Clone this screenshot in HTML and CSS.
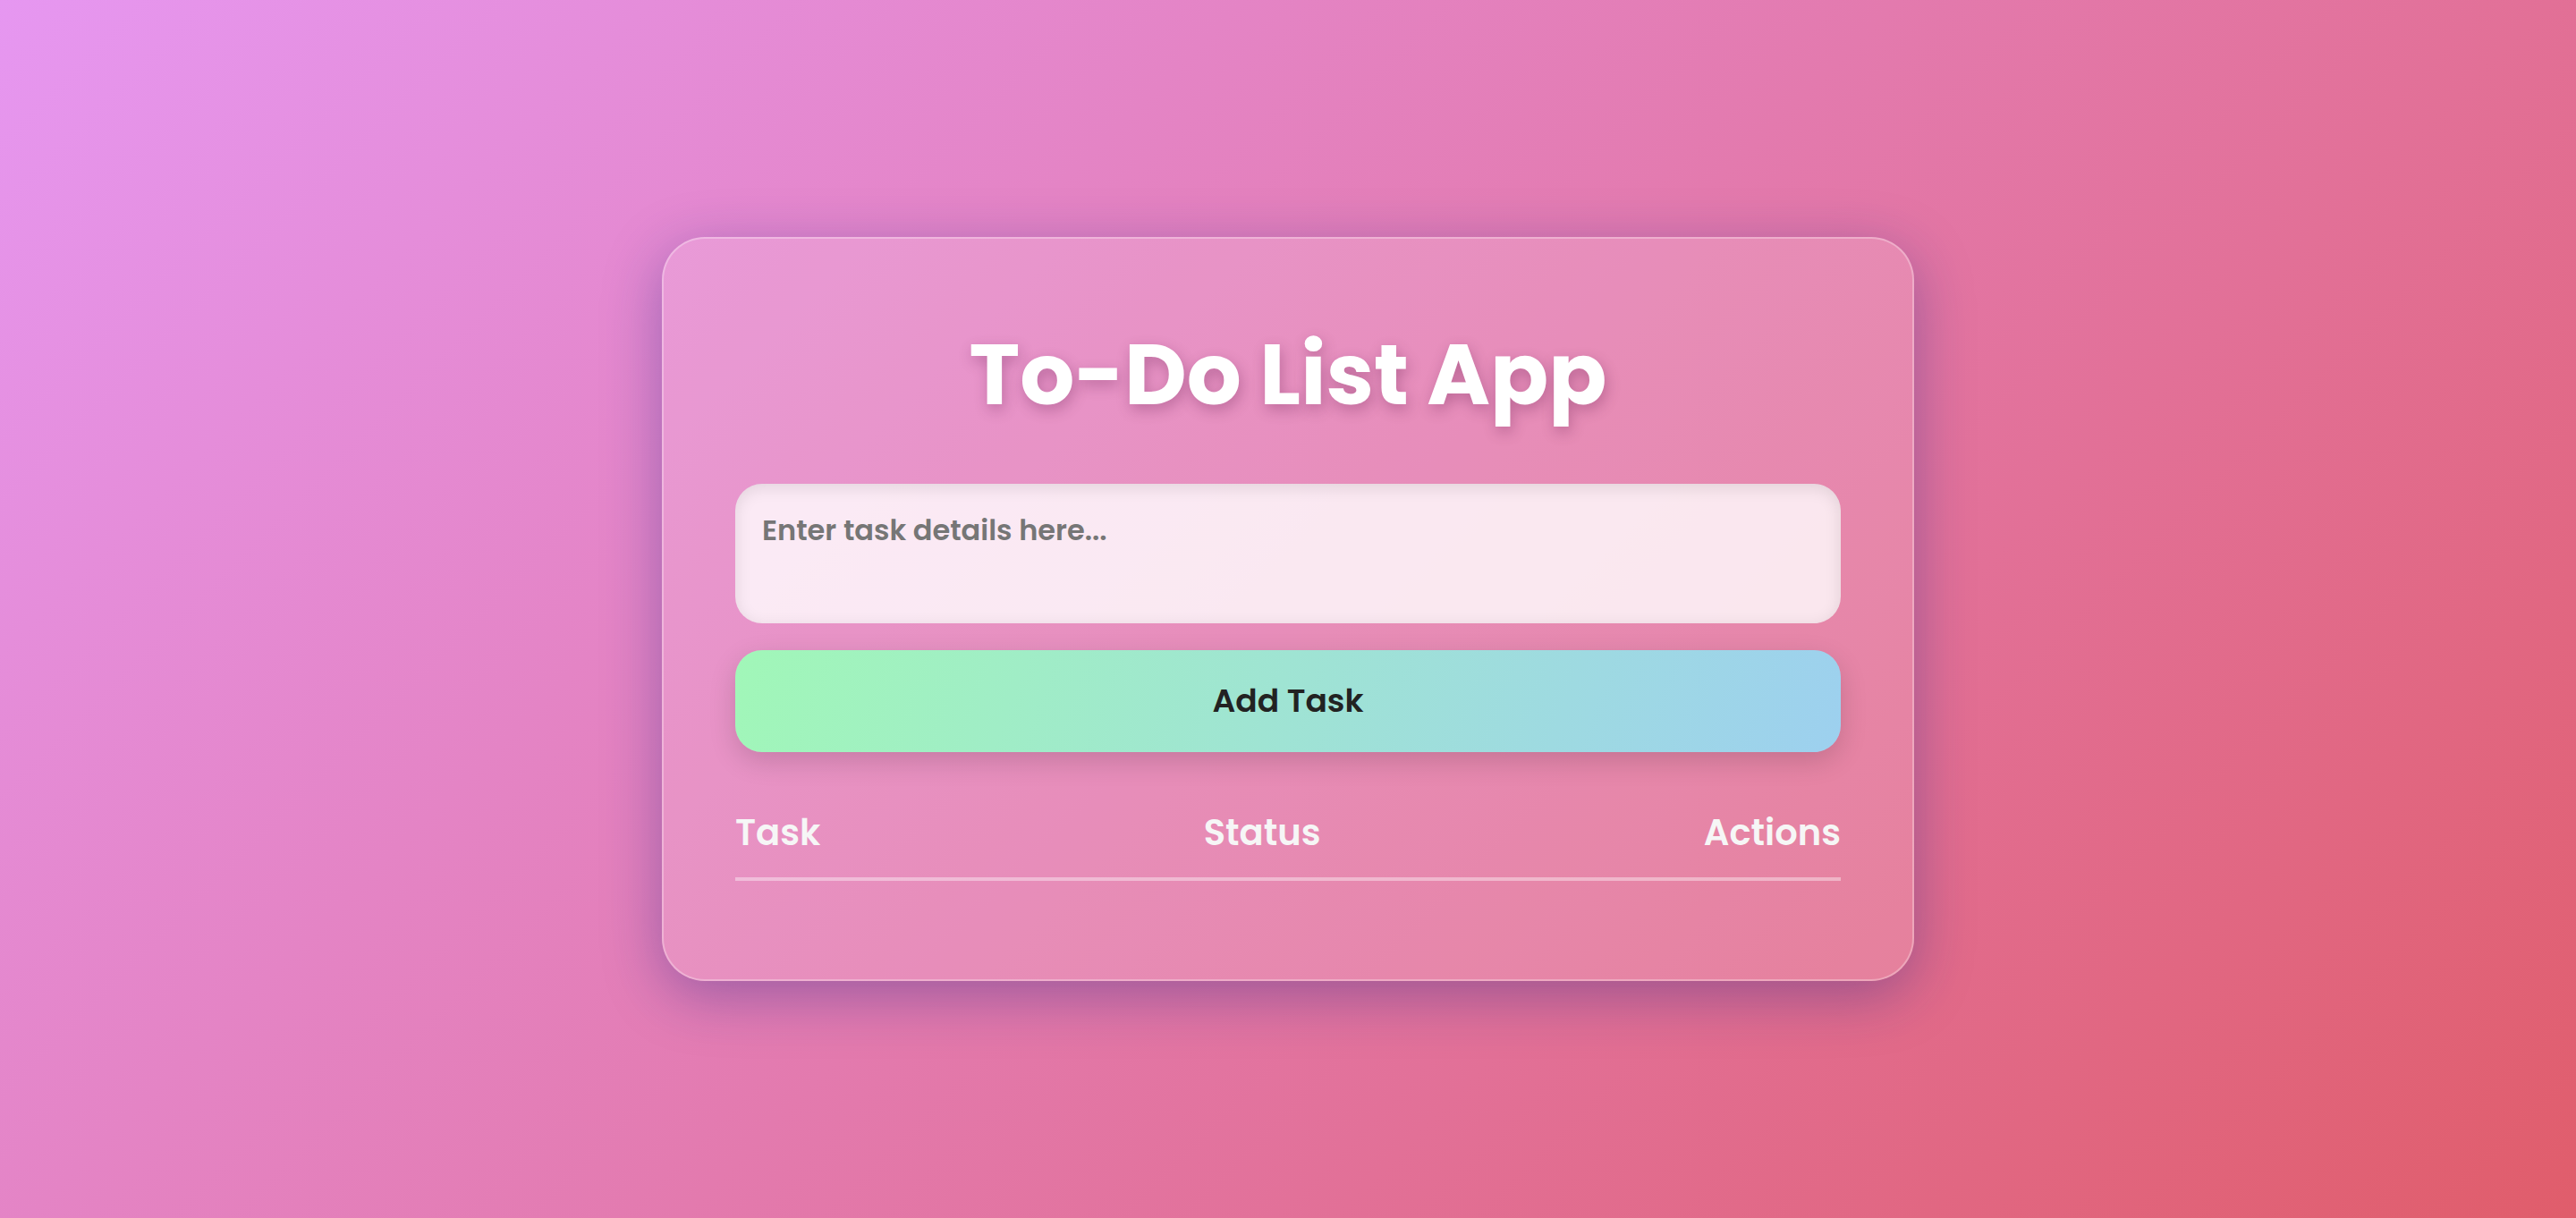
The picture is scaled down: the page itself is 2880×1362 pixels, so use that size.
FILE: index.html
```html
<!DOCTYPE html>
<html lang="en">
<head>
<meta charset="utf-8">
<title>To-Do List App</title>
<link rel="stylesheet" href="styles.css">
</head>
<body>
  <main class="card">
    <h1 class="title">To-Do List App</h1>
    <textarea class="task-input" placeholder="Enter task details here..."></textarea>
    <button class="add-btn" type="button">Add Task</button>
    <div class="list-head">
      <span class="col">Task</span>
      <span class="col">Status</span>
      <span class="col">Actions</span>
    </div>
    <ul class="task-list"></ul>
  </main>
</body>
</html>
```

FILE: styles.css
```css
* {
  box-sizing: border-box;
}

html, body {
  margin: 0;
  padding: 0;
}

body {
  min-height: 100vh;
  display: flex;
  align-items: center;
  justify-content: center;
  font-family: "Poppins", "Inter", "Liberation Sans", sans-serif;
  background: linear-gradient(135deg, #e697f1 0%, #e05d6b 100%);
}

.card {
  width: 1400px;
  padding: 80px;
  border-radius: 48px;
  border: 2px solid rgba(255, 255, 255, 0.3);
  background: rgba(255, 255, 255, 0.15);
  box-shadow: 0 16px 64px rgba(31, 38, 135, 0.37);
  display: flex;
  flex-direction: column;
}

.title {
  margin: 0 0 50px;
  height: 144px;
  line-height: 144px;
  font-size: 96px;
  font-weight: 700;
  color: #ffffff;
  text-align: center;
  text-shadow: 2px 6px 16px rgba(90, 20, 70, 0.3);
}

.task-input {
  display: block;
  width: 100%;
  height: 156px;
  padding: 30px;
  border: none;
  border-radius: 30px;
  resize: none;
  outline: none;
  font-family: inherit;
  font-size: 32px;
  font-weight: 600;
  line-height: 44px;
  color: #333;
  background: rgba(255, 255, 255, 0.8);
  box-shadow: inset 0 4px 18px rgba(0, 0, 0, 0.1);
}

.task-input::placeholder {
  color: #767676;
  opacity: 1;
}

.add-btn {
  margin-top: 30px;
  width: 100%;
  padding: 30px;
  border: none;
  border-radius: 30px;
  font-family: inherit;
  font-size: 36px;
  font-weight: 600;
  line-height: 54px;
  color: #222222;
  background: linear-gradient(110deg, #a1f7b8 0%, #9dd0ef 100%);
  box-shadow: 0 10px 30px rgba(0, 0, 0, 0.15);
  cursor: pointer;
}

.list-head {
  margin-top: 60px;
  display: flex;
  justify-content: space-between;
  padding-bottom: 20px;
  border-bottom: 4px solid rgba(255, 255, 255, 0.4);
}

.col {
  font-size: 40px;
  font-weight: 600;
  line-height: 60px;
  color: #f6f6f6;
}

.task-list {
  list-style: none;
  margin: 30px 0 0;
  padding: 0;
}
```
